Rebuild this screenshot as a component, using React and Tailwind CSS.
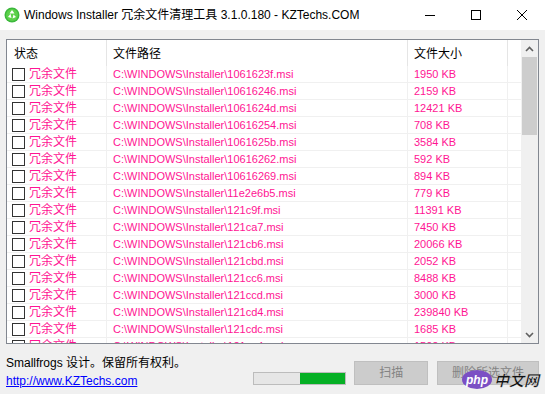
const rows = [
    ["1061623f.msi", "1950 KB"],
    ["10616246.msi", "2159 KB"],
    ["1061624d.msi", "12421 KB"],
    ["10616254.msi", "708 KB"],
    ["1061625b.msi", "3584 KB"],
    ["10616262.msi", "592 KB"],
    ["10616269.msi", "894 KB"],
    ["11e2e6b5.msi", "779 KB"],
    ["121c9f.msi", "11391 KB"],
    ["121ca7.msi", "7450 KB"],
    ["121cb6.msi", "20066 KB"],
    ["121cbd.msi", "2052 KB"],
    ["121cc6.msi", "8488 KB"],
    ["121ccd.msi", "3000 KB"],
    ["121cd4.msi", "239840 KB"],
    ["121cdc.msi", "1685 KB"],
    ["121ce4.msi", "1502 KB"],
]

const font = { fontFamily: '"Liberation Sans", "Noto Sans CJK SC", sans-serif' }

const AppIcon = () => (
    <svg width="16" height="16" viewBox="0 0 16 16">
        <circle cx="8" cy="8" r="7.5" fill="#3cb83c" />
        <circle cx="8" cy="8" r="6" fill="#5cd04a" />
        <path d="M8 3 L10.5 6.5 L5.5 6.5 Z" fill="#fff" />
        <path d="M4 10 L6.5 6.8 L7.5 11 Z" fill="#fff" />
        <path d="M12 10 L8.5 11.5 L9.5 7.5 Z" fill="#fff" />
    </svg>
)

const TitleBar = () => (
    <div className="h-[30px] bg-white flex items-center">
        <div className="pl-[4px] pr-[4px] flex items-center"><AppIcon /></div>
        <span className="text-[12px] text-black" style={font}>Windows Installer 冗余文件清理工具 3.1.0.180 - KZTechs.COM</span>
        <div className="ml-auto flex h-full">
            <div className="w-[46px] h-full flex items-center justify-center">
                <svg width="10" height="10" viewBox="0 0 10 10"><path d="M0 5.5 H10" stroke="#000" strokeWidth="1" /></svg>
            </div>
            <div className="w-[46px] h-full flex items-center justify-center">
                <svg width="10" height="10" viewBox="0 0 10 10"><rect x="0.5" y="0.5" width="9" height="9" fill="none" stroke="#000" strokeWidth="1" /></svg>
            </div>
            <div className="w-[46px] h-full flex items-center justify-center">
                <svg width="10" height="10" viewBox="0 0 10 10"><path d="M0 0 L10 10 M10 0 L0 10" stroke="#000" strokeWidth="1" /></svg>
            </div>
        </div>
    </div>
)

const Scrollbar = () => (
    <div className="w-[17px] bg-[#f0f0f0] flex flex-col items-center">
        <div className="h-[17px] w-full flex items-center justify-center">
            <svg width="9" height="6" viewBox="0 0 9 6"><path d="M1 5 L4.5 1.5 L8 5" fill="none" stroke="#606060" strokeWidth="1.6" /></svg>
        </div>
        <div className="w-[15px] h-[78px] bg-[#cdcdcd]" />
        <div className="flex-1" />
        <div className="h-[17px] w-full flex items-center justify-center">
            <svg width="9" height="6" viewBox="0 0 9 6"><path d="M1 1 L4.5 4.5 L8 1" fill="none" stroke="#606060" strokeWidth="1.6" /></svg>
        </div>
    </div>
)

const FileList = () => (
    <div className="h-[305px] border border-[#828790] bg-white flex overflow-hidden">
        <div className="flex-1 overflow-hidden">
            <div className="flex h-[26px] text-[12px] text-black" style={font}>
                <div className="w-[100px] pl-[7px] pt-[2px] flex items-center border-r border-[#e5e5e5]">状态</div>
                <div className="w-[301px] pl-[6px] pt-[2px] flex items-center border-r border-[#e5e5e5]">文件路径</div>
                <div className="w-[100px] pl-[6px] pt-[2px] flex items-center border-r border-[#e5e5e5]">文件大小</div>
                <div className="flex-1" />
            </div>
            {rows.map(([name, size]) => (
                <div key={name} className="flex h-[17px] text-[#ff1493] border-b border-[#f0f0f0]" style={font}>
                    <div className="w-[100px] flex items-center pl-[5px] border-r border-[#f0f0f0]">
                        <span className="w-[13px] h-[13px] border border-[#333] bg-white shrink-0" />
                        <span className="ml-[4px] text-[12px]">冗余文件</span>
                    </div>
                    <div className="w-[301px] pl-[6px] flex items-center text-[11px] border-r border-[#f0f0f0] whitespace-nowrap">C:\WINDOWS\Installer\{name}</div>
                    <div className="w-[100px] pl-[6px] flex items-center text-[11px] border-r border-[#f0f0f0]">{size}</div>
                    <div className="flex-1" />
                </div>
            ))}
        </div>
        <Scrollbar />
    </div>
)

const Footer = () => (
    <div className="flex items-start pt-[10px] relative">
        <div className="flex flex-col text-[12px] w-[247px]" style={font}>
            <span className="h-[18px] leading-[18px] text-black">Smallfrogs 设计。保留所有权利。</span>
            <span className="h-[18px] leading-[18px] text-[#0000ff] underline">http://www.KZTechs.com</span>
        </div>
        <div className="mt-[18px] w-[94px] h-[13px] border border-[#bcbcbc] bg-[#e6e6e6] flex">
            <div className="w-[46px]" />
            <div className="flex-1 bg-[#06b025]" />
        </div>
        <button className="ml-[8px] mt-[7px] w-[74px] h-[24px] border border-[#bfbfbf] bg-[#cccccc] text-[#838383] text-[12px]" style={font}>扫描</button>
        <button className="ml-[9px] mt-[7px] w-[102px] h-[24px] border border-[#bfbfbf] bg-[#cccccc] text-[#838383] text-[12px]" style={font}>删除所选文件</button>
        <div className="absolute left-[456px] top-[26px] flex items-center whitespace-nowrap">
            <div className="w-[30px] h-[19px] rounded-[50%] bg-[#7b4fc4] flex items-center justify-center">
                <span className="text-white text-[12px] italic font-bold leading-none" style={{ fontFamily: '"Liberation Sans", sans-serif' }}>php</span>
            </div>
            <span className="ml-[2px] text-[15px] font-bold italic text-[#111] leading-none" style={{ fontFamily: '"Noto Sans CJK SC", sans-serif', WebkitTextStroke: "0.3px #fff" }}>中文网</span>
        </div>
    </div>
)

const App = () => {
    return (
        <div className="w-[545px] h-[394px] bg-[#f0f0f0] overflow-hidden">
            <TitleBar />
            <div className="px-[6px] pt-[9px]">
                <FileList />
                <Footer />
            </div>
        </div>
    )
}

export default App
